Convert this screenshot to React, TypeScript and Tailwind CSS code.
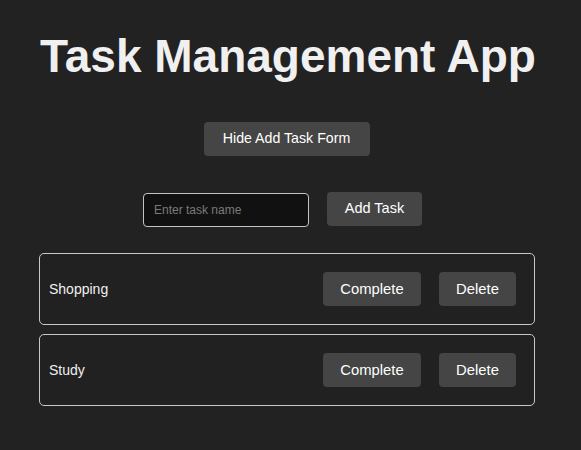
import React from 'react';

const tasks = ['Shopping', 'Study'];

const App = () => (
  <div className="min-h-[450px] bg-[#222222] text-[#f1f1f1]" style={{ fontFamily: '"Liberation Sans", Arial, sans-serif' }}>
    <div className="w-[573px] pt-[31px] pb-6">
      <h1 className="h-[50px] pl-[3px] text-center text-[46px] font-bold leading-[50px] text-[#f0f0f0]">Task Management App</h1>

      <div className="mt-[41px] flex justify-center">
        <button className="h-[34px] w-[166px] rounded-[4px] bg-[#454545] text-[14.2px] text-white">Hide Add Task Form</button>
      </div>

      <div className="mt-[36px] flex items-start pl-[143px]">
        <input
          type="text"
          placeholder="Enter task name"
          className="mt-px h-[34px] w-[166px] rounded-[4px] border border-[#c4c4c4] bg-[#111111] px-[10px] text-[12px] text-white outline-none placeholder:text-[#7a7a7a]"
        />
        <button className="ml-[18px] h-[34px] w-[95px] rounded-[4px] bg-[#454545] text-[14.5px] text-white">Add Task</button>
      </div>

      <div className="mt-[26px] ml-[39px] flex w-[496px] flex-col gap-[9px]">
        {tasks.map((t) => (
          <div key={t} className="flex h-[72px] items-center justify-between rounded-[5px] border border-[#c8c8c8] bg-[#212121] pl-[9px] pr-[18px]">
            <span className="text-[14px] text-[#f0f0f0]">{t}</span>
            <div className="flex gap-[18px]">
              <button className="h-[34px] w-[98px] rounded-[4px] bg-[#454545] text-[14.8px] text-white">Complete</button>
              <button className="h-[34px] w-[77px] rounded-[4px] bg-[#454545] text-[14.8px] text-white">Delete</button>
            </div>
          </div>
        ))}
      </div>
    </div>
  </div>
);

export default App;
